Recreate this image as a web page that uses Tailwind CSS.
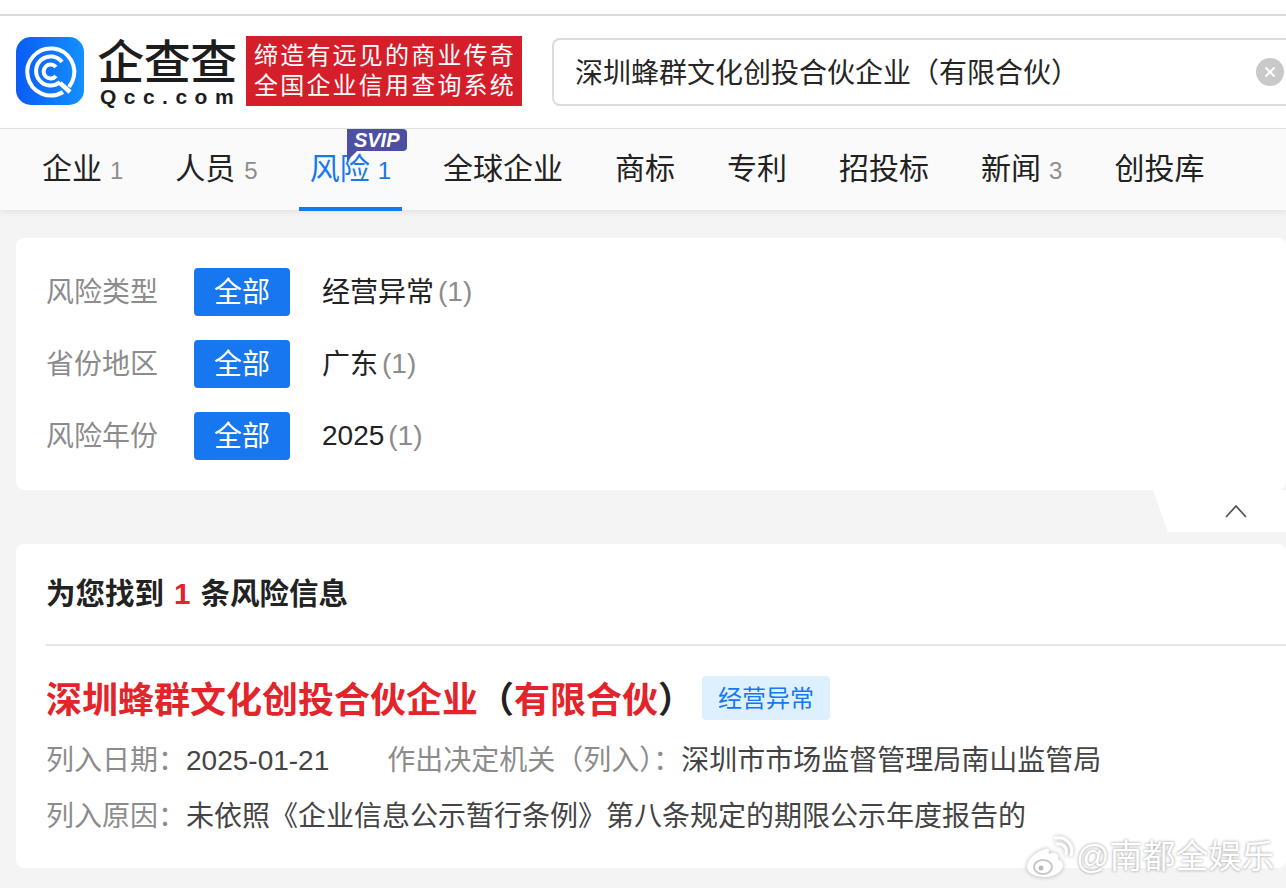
<!DOCTYPE html>
<html lang="zh"><head><meta charset="utf-8">
<script src="https://cdn.jsdelivr.net/npm/@tailwindcss/browser@4"></script>
</head>
<body class="bg-[#f4f4f4]">
<div class="relative w-[1286px] h-[888px] overflow-hidden bg-[#f4f4f4] font-['Liberation_Sans','Noto_Sans_CJK_SC',sans-serif] text-[#222]">
  <div class="h-[14px] bg-white"></div>
  <div class="h-[2px] bg-[#d8dcdb]"></div>
  <header class="h-[112px] bg-white flex items-center pl-4 pb-[2px]">
    <svg class="w-[68px] h-[68px] shrink-0" viewBox="0 0 68 68">
      <defs><linearGradient id="g" x1="0" y1="0" x2="1" y2="0"><stop offset="0" stop-color="#0a5cf5"/><stop offset="1" stop-color="#1390ff"/></linearGradient></defs>
      <rect width="68" height="68" rx="15" fill="url(#g)"/>
      <path d="M47 55 A23.500 23.500 0 1 1 56 45 L53 50" fill="none" stroke="#fff" stroke-width="4"/>
      <path d="M44 45 A14.500 14.500 0 1 1 46 25" fill="none" stroke="#fff" stroke-width="4"/>
      <path d="M40 30 A7 7 0 1 0 40 39" fill="none" stroke="#fff" stroke-width="4"/>
      <path d="M44 46 L54 55" fill="none" stroke="#fff" stroke-width="4.500"/>
    </svg>
    <div class="ml-3 w-[142px] flex flex-col items-center shrink-0 pt-[2px]">
      <div class="text-[47px] leading-[48px] font-medium tracking-[-0.5px] whitespace-nowrap text-[#1d1d1d]">企查查</div>
      <div class="text-[21px] leading-[19px] font-bold tracking-[7.500px] pl-[7px] whitespace-nowrap text-[#1d1d1d]">Qcc.com</div>
    </div>
    <div class="ml-[8px] w-[276px] h-[70px] bg-[#d41e2a] text-white text-[24px] leading-[30px] tracking-[2.200px] pl-[2px] flex flex-col items-center justify-center whitespace-nowrap shrink-0">
      <div>缔造有远见的商业传奇</div>
      <div>全国企业信用查询系统</div>
    </div>
    <div class="ml-[30px] mt-[2px] w-[760px] h-[68px] shrink-0 border-2 border-[#dcdcdc] border-r-0 rounded-l-lg flex items-center pl-[21px]">
      <span class="text-[28px] pt-[4px] whitespace-nowrap text-[#262626] w-[680px]">深圳蜂群文化创投合伙企业（有限合伙）</span>
      <span class="ml-[1px] w-7 h-7 rounded-full bg-[#c9c9c9] flex items-center justify-center shrink-0">
        <svg class="w-3 h-3" viewBox="0 0 12 12"><path d="M1.500 1.500 L10.500 10.500 M10.500 1.500 L1.500 10.500" stroke="#fff" stroke-width="2"/></svg>
      </span>
    </div>
  </header>
  <div class="h-[1px] bg-[#e4e4e4]"></div>
  <nav class="relative h-[81px] bg-[#fafafa] shadow-[0_2px_6px_rgba(0,0,0,0.08)] flex items-start pl-[42px] gap-[52px] text-[30px] leading-[80px] whitespace-nowrap">
    <div>企业<span class="ml-2 text-[24px] text-[#8e8e8e]">1</span></div>
    <div>人员<span class="ml-[9px] text-[24px] text-[#8e8e8e]">5</span></div>
    <div class="relative text-[#1677ee]">风险<span class="ml-2 text-[24px]">1</span>
      <div class="absolute -left-[11px] -right-[11px] top-[78px] h-[4px] bg-[#1677ee]"></div>
      <div class="absolute left-[37px] top-0 w-[10px] h-[32px] bg-[#4c4fa2] [clip-path:polygon(0_0,100%_0,100%_70%,0_100%)]"></div>
      <div class="absolute left-[37px] top-0 w-[60px] h-[22px] rounded-[4px] rounded-bl-none bg-[#4c4fa2] text-white italic font-black text-[20px] leading-[22px] text-center">SVIP</div>
    </div>
    <div>全球企业</div>
    <div>商标</div>
    <div>专利</div>
    <div>招投标</div>
    <div>新闻<span class="ml-2 text-[24px] text-[#8e8e8e]">3</span></div>
    <div>创投库</div>
  </nav>
  <main class="px-4 pt-[28px] -mr-4">
    <section class="bg-white rounded-lg h-[252px] px-[30px] pt-[30px] text-[28px]">
      <div class="flex flex-col gap-[24px]">
        <div class="flex items-center h-[48px]"><span class="w-[148px] pt-[2px] text-[#8c8c8c]">风险类型</span><span class="w-24 h-12 pt-[2px] rounded bg-[#1677ee] text-white flex items-center justify-center">全部</span><span class="ml-[32px] pt-[2px]">经营异常</span><span class="ml-[4px] text-[#8c8c8c]">(1)</span></div>
        <div class="flex items-center h-[48px]"><span class="w-[148px] pt-[2px] text-[#8c8c8c]">省份地区</span><span class="w-24 h-12 pt-[2px] rounded bg-[#1677ee] text-white flex items-center justify-center">全部</span><span class="ml-[32px] pt-[2px]">广东</span><span class="ml-[4px] text-[#8c8c8c]">(1)</span></div>
        <div class="flex items-center h-[48px]"><span class="w-[148px] pt-[2px] text-[#8c8c8c]">风险年份</span><span class="w-24 h-12 pt-[2px] rounded bg-[#1677ee] text-white flex items-center justify-center">全部</span><span class="ml-[32px]">2025</span><span class="ml-[4px] text-[#8c8c8c]">(1)</span></div>
      </div>
    </section>
    <div class="h-[42px] flex justify-end mb-[12px]">
      <div class="w-[133px] h-[42px] bg-white [clip-path:polygon(0_0,100%_0,100%_100%,15px_100%)] flex items-center pl-[72px]">
        <svg class="w-[22px] h-[14px]" viewBox="0 0 22 14"><path d="M1 13 L11 2 L21 13" fill="none" stroke="#555" stroke-width="1.800"/></svg>
      </div>
    </div>
    <section class="bg-white rounded-lg h-[324px] pl-[30px]">
      <div class="h-[102px] border-b-2 border-[#e6e6e6] flex items-center text-[29.500px] font-bold whitespace-nowrap">为您找到<span class="mx-[10px] text-[#e3242b]">1</span>条风险信息</div>
      <div class="mt-[30px] flex items-center h-[44px] whitespace-nowrap">
        <span class="text-[36px] pt-[6px] font-semibold text-[#e3242b]">深圳蜂群文化创投合伙企业</span><span class="text-[36px] pt-[6px] font-semibold">（</span><span class="text-[36px] pt-[6px] font-semibold text-[#e3242b]">有限合伙</span><span class="text-[36px] pt-[6px] font-semibold">）</span>
        <span class="ml-[8px] w-[128px] h-[44px] rounded bg-[#deeffe] text-[#1677ee] text-[24px] pt-[2px] flex items-center justify-center">经营异常</span>
      </div>
      <div class="mt-[19px] flex text-[28px] leading-[44px] whitespace-nowrap">
        <span class="text-[#8c8c8c]">列入日期：</span><span class="text-[#444]">2025-01-21</span><span class="ml-[58px] text-[#8c8c8c]">作出决定机关（列入）：</span><span class="text-[#444]">深圳市市场监督管理局南山监管局</span>
      </div>
      <div class="mt-[12px] flex text-[28px] leading-[44px] whitespace-nowrap">
        <span class="text-[#8c8c8c]">列入原因：</span><span class="text-[#444]">未依照《企业信息公示暂行条例》第八条规定的期限公示年度报告的</span>
      </div>
    </section>
  </main>
  <div class="absolute left-[1025px] top-[836px] flex items-center whitespace-nowrap">
    <svg class="w-[48px] h-[42px] [filter:drop-shadow(0_0_2px_rgba(0,0,0,0.3))]" viewBox="0 0 48 42">
      <path d="M20 13 C12 15 2 23 2 31 C2 37 10 41 20 41 C31 41 38 35 38 29 C38 25 34 24 33 23 C34 19 32 16 27 17 C24 18 23 18 24 15 C24 12 22 12 20 13Z" fill="#fff"/>
      <ellipse cx="18" cy="31" rx="9" ry="7" fill="none" stroke="#c8c8c8" stroke-width="2"/>
      <circle cx="16" cy="32" r="2.500" fill="#bbb"/>
      <path d="M32 8 C38 7 43 12 41 18 M31 2 C41 0 49 9 46 19" fill="none" stroke="#fff" stroke-width="3" stroke-linecap="round"/>
    </svg>
    <span class="ml-[3px] text-[33px] leading-[42px] text-white [text-shadow:0_0_3px_rgba(0,0,0,0.45)]">@南都全娱乐</span>
  </div>
</div>
</body></html>
